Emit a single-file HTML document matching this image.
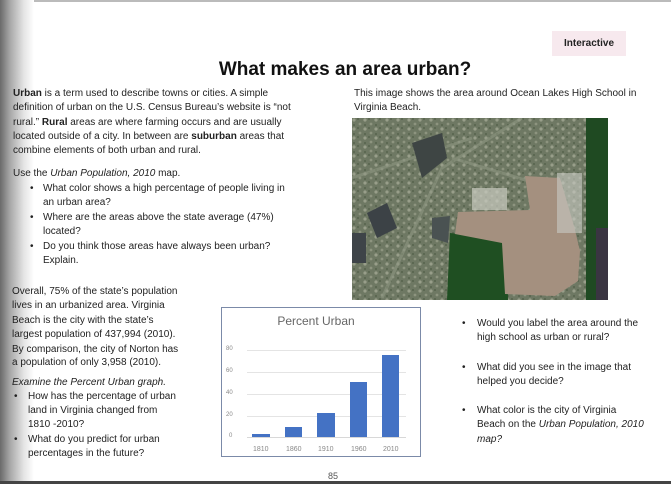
<!DOCTYPE html>
<html><head><meta charset="utf-8"><style>
body{margin:0;width:671px;height:484px;background:#fff;position:relative;overflow:hidden;font-family:"Liberation Sans",sans-serif;color:#222}
.t{position:absolute;font-size:10px;letter-spacing:0px;white-space:nowrap;line-height:14px}
b{font-weight:bold}
.xl{position:absolute;top:446px;font-size:7px;color:#888}
</style></head><body>
<div style="position:absolute;left:0;top:0;width:671px;height:2px;background:#bbb"></div>
<div style="position:absolute;left:0;top:0;width:34px;height:484px;background:linear-gradient(to right,#6a6a6a,#a8a8a8 30%,#e4e4e4 70%,#fff)"></div>
<div style="position:absolute;left:0;top:481px;width:671px;height:3px;background:#444"></div>
<div style="position:absolute;left:552px;top:31px;width:74px;height:25px;background:#f7e9ee;font-size:10px;font-weight:bold;text-align:center;line-height:25px">Interactive</div>
<div style="position:absolute;left:0;width:690px;top:59px;text-align:center;font-size:19px;font-weight:bold;color:#111">What makes an area urban?</div>

<div class="t" style="left:13px;top:87px"><b>Urban</b> is a term used to describe towns or cities. A simple</div>
<div class="t" style="left:13px;top:101px">definition of urban on the U.S. Census Bureau’s website is “not</div>
<div class="t" style="left:13px;top:116px">rural.” <b>Rural</b> areas are where farming occurs and are usually</div>
<div class="t" style="left:13px;top:130px">located outside of a city. In between are <b>suburban</b> areas that</div>
<div class="t" style="left:13px;top:144px">combine elements of both urban and rural.</div>
<div class="t" style="left:13px;top:167px">Use the <i>Urban Population, 2010</i> map.</div>
<div class="t" style="left:30px;top:182px">•</div><div class="t" style="left:43px;top:182px">What color shows a high percentage of people living in</div>
<div class="t" style="left:43px;top:196px">an urban area?</div>
<div class="t" style="left:30px;top:211px">•</div><div class="t" style="left:43px;top:211px">Where are the areas above the state average (47%)</div>
<div class="t" style="left:43px;top:225px">located?</div>
<div class="t" style="left:30px;top:240px">•</div><div class="t" style="left:43px;top:240px">Do you think those areas have always been urban?</div>
<div class="t" style="left:43px;top:254px">Explain.</div>

<div class="t" style="left:12px;top:285px">Overall, 75% of the state’s population</div>
<div class="t" style="left:12px;top:299px">lives in an urbanized area. Virginia</div>
<div class="t" style="left:12px;top:314px">Beach is the city with the state’s</div>
<div class="t" style="left:12px;top:328px">largest population of 437,994 (2010).</div>
<div class="t" style="left:12px;top:343px">By comparison, the city of Norton has</div>
<div class="t" style="left:12px;top:356px">a population of only 3,958 (2010).</div>
<div class="t" style="left:12px;top:376px"><i>Examine the Percent Urban graph.</i></div>
<div class="t" style="left:14px;top:390px">•</div><div class="t" style="left:28px;top:390px">How has the percentage of urban</div>
<div class="t" style="left:28px;top:404px">land in Virginia changed from</div>
<div class="t" style="left:28px;top:418px">1810 -2010?</div>
<div class="t" style="left:14px;top:433px">•</div><div class="t" style="left:28px;top:433px">What do you predict for urban</div>
<div class="t" style="left:28px;top:447px">percentages in the future?</div>

<div class="t" style="left:354px;top:87px">This image shows the area around Ocean Lakes High School in</div>
<div class="t" style="left:354px;top:101px">Virginia Beach.</div>

<svg style="position:absolute;left:352px;top:118px" width="256" height="182" viewBox="0 0 256 182">
<defs><pattern id="n" width="11" height="9" patternUnits="userSpaceOnUse"><rect width="11" height="9" fill="#6e7863"/><circle cx="2" cy="2" r="1.6" fill="#989e8a"/><circle cx="8" cy="6" r="1.4" fill="#8d947f"/><circle cx="6" cy="1" r="1" fill="#56634c"/><circle cx="2" cy="7" r="1" fill="#56634c"/></pattern></defs>
<rect width="256" height="182" fill="url(#n)"/>
<path d="M0 60 L120 20 M30 180 L90 50 L170 0 M100 40 L200 70" stroke="#8e9682" stroke-width="3" opacity=".6" fill="none"/>
<rect x="234" y="0" width="22" height="182" fill="#1f4a22"/>
<rect x="244" y="110" width="12" height="72" fill="#3a3542"/>
<polygon points="98,115 155,122 156,182 95,182" fill="#1f4f22"/>
<polygon points="173,58 208,60 222,108 228,133 226,163 203,178 153,176 150,125 103,116 106,94 178,92" fill="#a4907f"/>
<rect x="205" y="55" width="25" height="60" fill="#c9cbc4" opacity=".6"/>
<rect x="120" y="70" width="35" height="22" fill="#c9cbc0" opacity=".7"/>
<polygon points="60,25 90,15 95,40 70,60" fill="#3e4544"/>
<polygon points="15,95 35,85 45,110 25,120" fill="#3c4246"/>
<polygon points="80,100 98,98 96,125 80,120" fill="#4a5252"/>
<rect x="0" y="115" width="14" height="30" fill="#3e4448"/>
</svg>

<div style="position:absolute;left:221px;top:307px;width:198px;height:148px;border:1.5px solid #7b8aa8;background:#fff"></div>
<div style="position:absolute;left:221px;top:314px;width:190px;text-align:center;font-size:12px;color:#666">Percent Urban</div>
<div style="position:absolute;left:247px;top:350px;width:159px;height:1px;background:#e4e4e4"></div>
<div style="position:absolute;left:247px;top:372px;width:159px;height:1px;background:#e4e4e4"></div>
<div style="position:absolute;left:247px;top:394px;width:159px;height:1px;background:#e4e4e4"></div>
<div style="position:absolute;left:247px;top:416px;width:159px;height:1px;background:#e4e4e4"></div>
<div style="position:absolute;left:247px;top:437px;width:159px;height:1px;background:#d8d8d8"></div>
<div style="position:absolute;left:226px;top:346px;font-size:6px;color:#888">80</div>
<div style="position:absolute;left:226px;top:368px;font-size:6px;color:#888">60</div>
<div style="position:absolute;left:226px;top:390px;font-size:6px;color:#888">40</div>
<div style="position:absolute;left:226px;top:412px;font-size:6px;color:#888">20</div>
<div style="position:absolute;left:229px;top:433px;font-size:6px;color:#888">0</div>
<div style="position:absolute;left:252px;top:434px;width:18px;height:3px;background:#4472c4"></div>
<div style="position:absolute;left:285px;top:427px;width:17px;height:10px;background:#4472c4"></div>
<div style="position:absolute;left:317px;top:413px;width:18px;height:24px;background:#4472c4"></div>
<div style="position:absolute;left:350px;top:382px;width:17px;height:55px;background:#4472c4"></div>
<div style="position:absolute;left:382px;top:355px;width:17px;height:82px;background:#4472c4"></div>
<div class="xl" style="left:253px">1810</div>
<div class="xl" style="left:286px">1860</div>
<div class="xl" style="left:318px">1910</div>
<div class="xl" style="left:351px">1960</div>
<div class="xl" style="left:383px">2010</div>

<div class="t" style="left:462px;top:317px">•</div><div class="t" style="left:477px;top:317px">Would you label the area around the</div>
<div class="t" style="left:477px;top:331px">high school as urban or rural?</div>
<div class="t" style="left:462px;top:361px">•</div><div class="t" style="left:477px;top:361px">What did you see in the image that</div>
<div class="t" style="left:477px;top:375px">helped you decide?</div>
<div class="t" style="left:462px;top:404px">•</div><div class="t" style="left:477px;top:404px">What color is the city of Virginia</div>
<div class="t" style="left:477px;top:418px">Beach on the <i>Urban Population, 2010</i></div>
<div class="t" style="left:477px;top:433px"><i>map?</i></div>

<div style="position:absolute;left:328px;top:471px;font-size:9px;color:#555">85</div>
</body></html>
